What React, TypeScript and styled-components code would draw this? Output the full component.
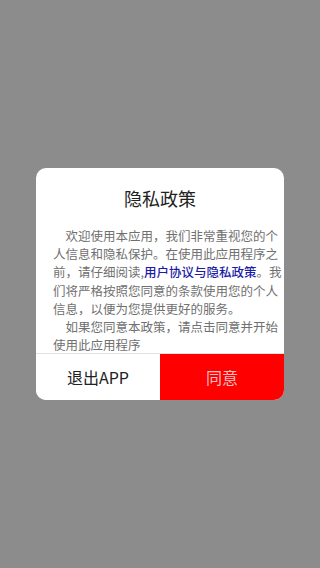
import React from "react";
import styled, { createGlobalStyle } from "styled-components";

const GlobalStyle = createGlobalStyle`
  html, body, #root {
    margin: 0;
    padding: 0;
    height: 100%;
  }
  body {
    background: #8c8c8c;
    font-family: "Noto Sans CJK SC", "Noto Sans", sans-serif;
  }
`;

const Screen = styled.div`
  width: 320px;
  height: 568px;
  display: flex;
  align-items: center;
  justify-content: center;
  background: #8c8c8c;
`;

const Dialog = styled.div`
  width: 248px;
  height: 232px;
  background: #ffffff;
  border-radius: 10px;
  overflow: hidden;
  display: flex;
  flex-direction: column;
`;

const Title = styled.h2`
  margin: 0;
  padding-top: 18px;
  height: 24px;
  line-height: 24px;
  font-size: 18px;
  font-weight: 400;
  color: #222222;
  text-align: center;
`;

const Body = styled.div`
  flex: 1;
  padding: 17px 1px 0 17px;
  overflow: hidden;
`;

const Paragraph = styled.p`
  margin: 0;
  font-size: 12.5px;
  line-height: 18.2px;
  color: #707070;
  text-indent: 1em;
`;

const Link = styled.span`
  color: #1c1ca6;
  font-weight: 500;
`;

const Actions = styled.div`
  display: flex;
  height: 46px;
  border-top: 1px solid #e2e2e2;
`;

const ActionButton = styled.button<{ $primary?: boolean }>`
  flex: 1;
  border: none;
  margin: 0;
  padding: 0;
  font-family: "Noto Sans CJK SC", "Noto Sans", sans-serif;
  font-size: 16px;
  background: ${(p) => (p.$primary ? "#ff0000" : "#ffffff")};
  color: ${(p) => (p.$primary ? "#f8c0c0" : "#222222")};
  cursor: pointer;
`;

export default function App() {
  return (
    <>
      <GlobalStyle />
      <Screen>
        <Dialog>
          <Title>隐私政策</Title>
          <Body>
            <Paragraph>
              欢迎使用本应用，我们非常重视您的个人信息和隐私保护。在使用此应用程序之前，请仔细阅读,<Link>用户协议与隐私政策</Link>。我们将严格按照您同意的条款使用您的个人信息，以便为您提供更好的服务。
            </Paragraph>
            <Paragraph>如果您同意本政策，请点击同意并开始使用此应用程序</Paragraph>
          </Body>
          <Actions>
            <ActionButton>退出APP</ActionButton>
            <ActionButton $primary>同意</ActionButton>
          </Actions>
        </Dialog>
      </Screen>
    </>
  );
}
